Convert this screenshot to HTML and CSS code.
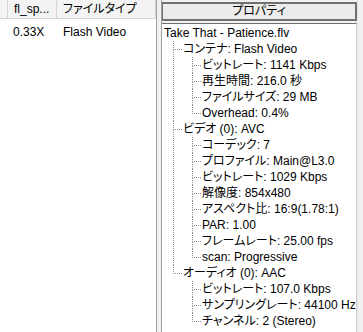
FILE: index.html
```html
<!DOCTYPE html>
<html lang="ja">
<head>
  <meta charset="UTF-8" />
  <title>プロパティ</title>
  <link rel="stylesheet" href="styles.css">
</head>
<body>
  <div class="app">
    <div class="list">
      <div class="list-head">
        <div class="col col-0"></div>
        <div class="col col-1">fl_sp...</div>
        <div class="col col-2">ファイルタイプ</div>
      </div>
      <div class="list-row">
        <div class="col col-0"></div>
        <div class="col col-1">0.33X</div>
        <div class="col col-2">Flash Video</div>
      </div>
    </div>

    <div class="splitter"></div>

    <div class="props">
      <div class="props-head">プロパティ</div>
      <div class="tree">
        <div class="node">Take That - Patience.flv</div>
        <ul>
          <li>
            <div class="node">コンテナ: Flash Video</div>
            <ul>
              <li><div class="node">ビットレート: 1141 Kbps</div></li>
              <li><div class="node">再生時間: 216.0 秒</div></li>
              <li><div class="node">ファイルサイズ: 29 MB</div></li>
              <li><div class="node">Overhead: 0.4%</div></li>
            </ul>
          </li>
          <li>
            <div class="node">ビデオ (0): AVC</div>
            <ul>
              <li><div class="node">コーデック: 7</div></li>
              <li><div class="node">プロファイル: Main@L3.0</div></li>
              <li><div class="node">ビットレート: 1029 Kbps</div></li>
              <li><div class="node">解像度: 854x480</div></li>
              <li><div class="node">アスペクト比: 16:9(1.78:1)</div></li>
              <li><div class="node">PAR: 1.00</div></li>
              <li><div class="node">フレームレート: 25.00 fps</div></li>
              <li><div class="node">scan: Progressive</div></li>
            </ul>
          </li>
          <li>
            <div class="node">オーディオ (0): AAC</div>
            <ul>
              <li><div class="node">ビットレート: 107.0 Kbps</div></li>
              <li><div class="node">サンプリングレート: 44100 Hz</div></li>
              <li><div class="node">チャンネル: 2 (Stereo)</div></li>
            </ul>
          </li>
        </ul>
      </div>
    </div>

    <div class="edge"></div>
  </div>
</body>
</html>
```

FILE: styles.css
```css
body {
  margin: 0;
  background: #f0f0f0;
  font-family: "Liberation Sans", "Noto Sans CJK JP", sans-serif;
  font-size: 12px;
  font-feature-settings: "palt" 1;
  color: #000;
}
.app {
  display: flex;
  height: 332px;
}

/* left list view */
.list {
  width: 156px;
  background: #fff;
  border-right: 1px solid #a0a0a0;
}
.list-head {
  display: flex;
  height: 18px;
  line-height: 18px;
  background: #f3f3f3;
  border-bottom: 1px solid #d5d5d5;
}
.list-head .col {
  border-right: 1px solid #d5d5d5;
}
.list-row {
  display: flex;
  height: 16px;
  line-height: 16px;
  margin-top: 5px;
}
.col {
  white-space: nowrap;
  overflow: hidden;
}
.col-0 {
  width: 7px;
}
.col-1 {
  width: 49px;
  padding-left: 6px;
  box-sizing: border-box;
}
.list-row .col-1 {
  width: 50px;
}
.col-2 {
  flex: 1;
  padding-left: 6px;
}

.splitter {
  width: 4px;
}

/* right property tree */
.props {
  flex: 1;
  display: flex;
  flex-direction: column;
  border-left: 1px solid #a0a0a0;
}
.props-head {
  margin-top: 2px;
  height: 15px;
  line-height: 15px;
  text-align: center;
  background: #ececec;
  border: 2px solid #707070;
  border-left-width: 1px;
}
.tree {
  flex: 1;
  margin-top: 2px;
  background: #fff;
  border-top: 1px solid #707070;
  border-right: 1px solid #d0d0d0;
  padding: 1px 0 0 2px;
}
.node {
  height: 16px;
  line-height: 16px;
  white-space: nowrap;
}
.tree ul {
  list-style: none;
  margin: 0 0 0 9px;
  padding: 0;
}
.tree li {
  position: relative;
  padding-left: 10px;
}
.tree li::before {
  content: '';
  position: absolute;
  left: 0;
  top: 0;
  width: 8px;
  height: 8px;
  border-left: 1px dotted #909090;
  border-bottom: 1px dotted #909090;
}
.tree li::after {
  content: '';
  position: absolute;
  left: 0;
  top: 8px;
  bottom: 0;
  border-left: 1px dotted #909090;
}
.tree li:last-child::after {
  display: none;
}

.edge {
  width: 5px;
  border-left: 1px solid #e3e3e3;
}
```
